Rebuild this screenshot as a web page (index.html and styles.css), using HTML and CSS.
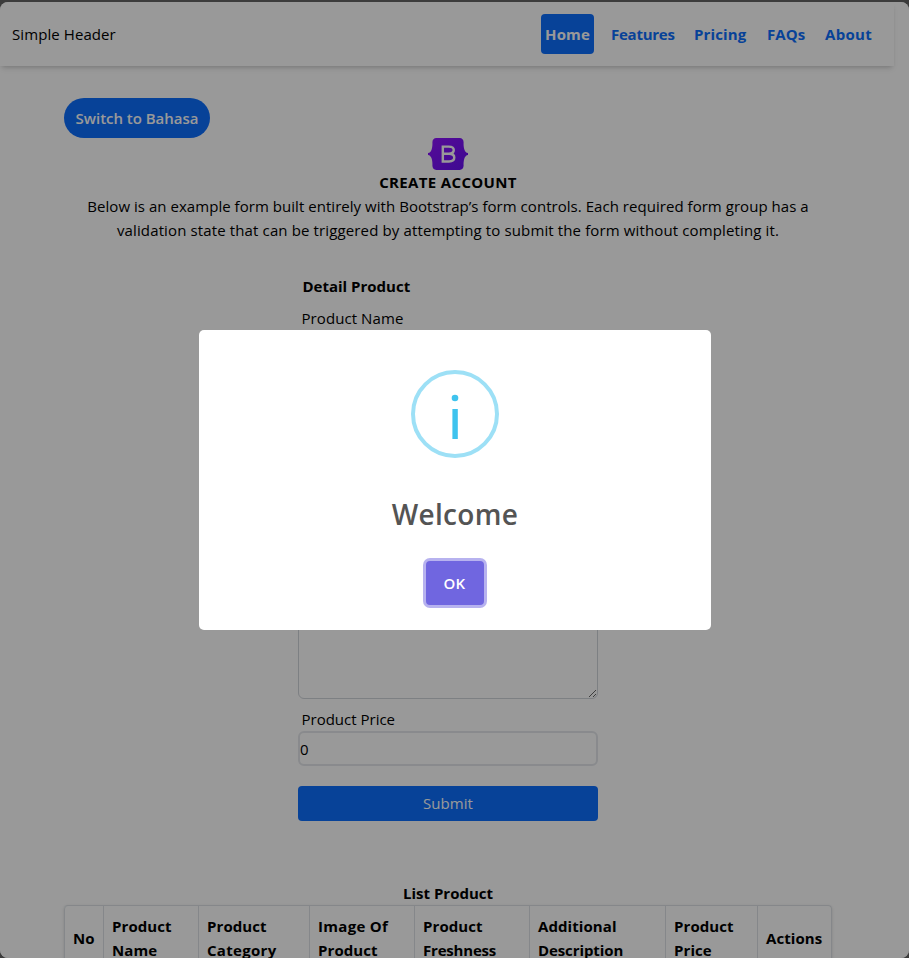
FILE: index.html
```
<!DOCTYPE html>
<html lang="en">
<head>
<meta charset="utf-8">
<title>Create Account</title>
<link rel="stylesheet" href="styles.css">
</head>
<body>
<div class="window">
  <header class="header">
    <span class="brand">Simple Header</span>
    <nav class="nav">
      <a class="active home">Home</a>
      <a class="features">Features</a>
      <a class="pricing">Pricing</a>
      <a class="faqs">FAQs</a>
      <a class="about">About</a>
    </nav>
  </header>
  <main class="main">
    <button class="switch">Switch to Bahasa</button>
    <svg class="logo" viewBox="0 0 118 94" width="40" height="32">
      <defs><linearGradient id="lg" x1="0" y1="0" x2="1" y2="1"><stop offset="0" stop-color="#9013fe"/><stop offset="1" stop-color="#6610f2"/></linearGradient></defs>
      <path fill="url(#lg)" d="M24.509 0c-6.733 0-11.715 5.893-11.492 12.284.214 6.14-.064 14.092-2.066 20.577C8.943 39.365 5.547 43.485 0 44.014v5.972c5.547.529 8.943 4.649 10.951 11.153 2.002 6.485 2.28 14.437 2.066 20.577C12.794 88.106 17.776 94 24.51 94H93.5c6.733 0 11.714-5.893 11.491-12.284-.214-6.14.064-14.092 2.066-20.577 2.009-6.504 5.396-10.624 10.943-11.153v-5.972c-5.547-.529-8.934-4.649-10.943-11.153-2.002-6.484-2.28-14.437-2.066-20.577C105.214 5.894 100.233 0 93.5 0H24.508z"/>
      <path fill="none" stroke="#fff" stroke-width="7.2" d="M43.5 25.2H61.5C71.5 25.2 76 29.5 76 35.5C76 42 70.5 46.3 61.5 46.3H43.5M43.5 46.3H62C72 46.3 77.5 50.5 77.5 57.5C77.5 65 72 69 62 69H43.5M43.7 21.6V72.6"/>
    </svg>
    <h1 class="title">CREATE ACCOUNT</h1>
    <p class="intro"><span class="line-a">Below is an example form built entirely with Bootstrap’s form controls. Each required form group has a</span> <span class="line-b">validation state that can be triggered by attempting to submit the form without completing it.</span></p>
    <form class="form">
      <h2 class="legend">Detail Product</h2>
      <label class="label">Product Name</label>
      <input class="field" type="text">
      <textarea class="area"></textarea>
      <label class="label price-label">Product Price</label>
      <input class="field" type="text" value="0">
      <button class="submit" type="button">Submit</button>
    </form>
    <h2 class="list-title">List Product</h2>
    <div class="table">
      <div class="cell"><span>No</span></div>
      <div class="cell"><span>Product</span><span>Name</span></div>
      <div class="cell"><span>Product</span><span class="category">Category</span></div>
      <div class="cell"><span class="image-of">Image Of</span><span>Product</span></div>
      <div class="cell"><span>Product</span><span class="freshness">Freshness</span></div>
      <div class="cell"><span>Additional</span><span class="description">Description</span></div>
      <div class="cell"><span>Product</span><span>Price</span></div>
      <div class="cell"><span>Actions</span></div>
    </div>
  </main>
  <div class="overlay">
    <section class="modal">
      <svg class="info" width="88" height="88" viewBox="0 0 88 88">
        <circle cx="44" cy="44" r="42" fill="none" stroke="#9de0f6" stroke-width="4"/>
        <circle cx="44" cy="28" r="3.3" fill="#3fc3ee"/>
        <rect x="41.4" y="39" width="5.4" height="30" fill="#3fc3ee"/>
      </svg>
      <h2 class="welcome">Welcome</h2>
      <button class="ok">OK</button>
    </section>
  </div>
</div>
</body>
</html>
```
FILE: styles.css
```
* { box-sizing: border-box; }
body {
  margin: 0;
  height: 958px;
  padding-top: 2px;
  overflow: hidden;
  background: #3c3c3c;
  font: 15px/24px "Open Sans", "Noto Sans", sans-serif;
  letter-spacing: 0.08px;
  color: #000;
}
h1, h2, p { margin: 0; font-size: 15px; }
button, input, textarea { font: inherit; letter-spacing: inherit; border: 0; margin: 0; }
.window {
  position: relative;
  height: 956px;
  overflow: hidden;
  border-radius: 8px;
  background: #fff;
}
.header {
  width: 894px;
  height: 64px;
  padding: 0 18px 0 12px;
  display: flex;
  justify-content: space-between;
  align-items: center;
  box-shadow: 0 4px 6px -2px rgba(0,0,0,.14), 0 2px 4px -2px rgba(0,0,0,.14);
}
.nav { display: flex; gap: 12px; font-weight: 700; color: #0d6efd; }
.nav a { padding: 8px 4px; border-radius: 4px; white-space: nowrap; }
.nav .active { background: #0d6efd; color: #fff; }
.home { width: 53px; margin-right: 1px; letter-spacing: 0.15px; }
.features { width: 71px; letter-spacing: -0.25px; }
.pricing { width: 61px; letter-spacing: 0.15px; }
.faqs { width: 46px; }
.about { width: 55px; letter-spacing: 0.3px; }
.main {
  width: 768px;
  margin: 32px 0 0 64px;
  display: flex;
  flex-direction: column;
  align-items: center;
}
.switch {
  align-self: flex-start;
  width: 146px;
  height: 40px;
  padding: 0;
  border-radius: 20px;
  background: #0d6efd;
  color: #fff;
  font-weight: 600;
  letter-spacing: -0.03px;
}
.logo { display: block; }
.title { font-weight: 700; letter-spacing: 0.35px; }
.intro { text-align: center; }
.intro span { display: block; white-space: nowrap; }
.line-a { letter-spacing: 0.04px; }
.line-b { letter-spacing: 0.13px; }
.form { width: 300px; margin-top: 32px; display: flex; flex-direction: column; }
.legend { padding-left: 4.5px; letter-spacing: 0; }
.label { margin-top: 8px; padding-left: 3.5px; }
.price-label { letter-spacing: 0; }
.field {
  height: 35px;
  padding: 0;
  border: 2px solid #e5e7eb;
  border-radius: 6px;
  background: #fff;
}
.area {
  height: 299px;
  margin-top: 35px;
  border: 1px solid #d1d5db;
  border-radius: 6px;
  resize: vertical;
}
.submit {
  height: 35px;
  margin-top: 20px;
  padding: 0 0 2px;
  border-radius: 4px;
  background: #0d6efd;
  color: #fff;
}
.list-title { margin-top: 60px; letter-spacing: 0; }
.table {
  width: 768px;
  display: grid;
  grid-template-columns: 39px 95px 111px 105px 115px 136px 92px 75px;
  border-top: 1px solid #dee2e6;
  border-right: 1px solid #dee2e6;
  border-radius: 4px;
  box-shadow: 0 1px 3px rgba(0,0,0,.15);
  font-weight: 700;
}
.cell {
  height: 63px;
  padding-left: 8px;
  border-left: 1px solid #dee2e6;
  display: flex;
  flex-direction: column;
  justify-content: center;
  white-space: nowrap;
}
.cell:first-child { border-top-left-radius: 4px; }
.category, .image-of { letter-spacing: 0.3px; }
.freshness { letter-spacing: -0.2px; }
.description { letter-spacing: -0.1px; }
.overlay {
  position: absolute;
  inset: 0;
  display: flex;
  justify-content: center;
  align-items: center;
  background: rgba(0,0,0,.4);
}
.modal {
  width: 512px;
  height: 300px;
  padding-top: 40px;
  border-radius: 5px;
  background: #fff;
  display: flex;
  flex-direction: column;
  align-items: center;
}
.welcome {
  margin-top: 36px;
  padding-left: 1px;
  font-size: 28px;
  line-height: 40px;
  font-weight: 600;
  letter-spacing: 0.3px;
  color: #545454;
}
.ok {
  width: 58px;
  height: 44px;
  margin-top: 27px;
  padding: 0;
  border-radius: 4px;
  background: #7066e0;
  box-shadow: 0 0 0 3px rgba(112,102,224,.5);
  color: #fff;
  font-weight: 600;
  letter-spacing: 0.4px;
}
```
